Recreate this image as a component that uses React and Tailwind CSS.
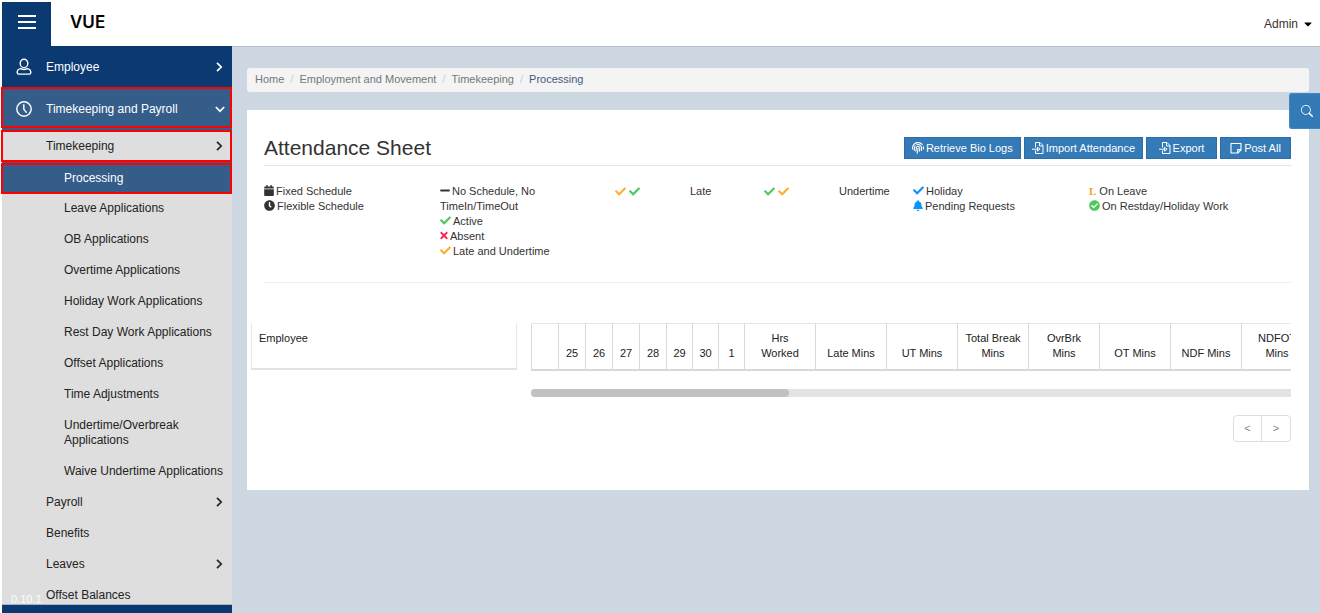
import { FaCalendar, FaClock, FaCheck, FaMinus, FaTimes, FaBell, FaCheckCircle, FaCaretDown } from "react-icons/fa";
import { FaFingerprint } from "react-icons/fa6";
import { BsSearch } from "react-icons/bs";

function UserIcon() {
  return (
    <svg viewBox="0 0 16 18" className="h-[18px] w-4 shrink-0" fill="none" stroke="currentColor" strokeWidth="1.4">
      <ellipse cx="8" cy="5.4" rx="3.8" ry="4.2" />
      <path d="M4.800 10.600C2.600 10.900 1.200 12 1.200 14.400c0 1 .5 1.700 1.500 1.700h10.600c1 0 1.500-.7 1.500-1.700 0-2.400-1.400-3.500-3.600-3.800-1.900 1.100-4.500 1.100-6.400 0z" />
    </svg>
  );
}

function ClockIcon() {
  return (
    <svg viewBox="0 0 18 18" className="h-[18px] w-4 shrink-0" fill="none" stroke="currentColor" strokeWidth="1.6" strokeLinecap="round">
      <circle cx="9" cy="9" r="8.100" />
      <path d="M8.800 4.200v5.200l2.800 3.300" />
    </svg>
  );
}

function Chevron({ down = false }) {
  return (
    <svg viewBox="0 0 10 10" className="size-[10px] shrink-0" fill="none" stroke="currentColor" strokeWidth="1.7">
      <path d={down ? "M.8 3 5 7.200 9.200 3" : "M3 .8 7.200 5 3 9.200"} />
    </svg>
  );
}

function FileArrowIcon() {
  return (
    <svg viewBox="0 0 12 12" className="size-3 shrink-0" fill="none" stroke="currentColor" strokeWidth="1">
      <path d="M3.500 5.500v-5H8l3 3v8H3.500v-3" />
      <path d="M7.500.5v3.500H11" />
      <path d="M0 7.200h5.500M5.500 5.300v3.800l2.600-1.900z" />
    </svg>
  );
}

function NoteIcon() {
  return (
    <svg viewBox="0 0 12 12" className="size-3 shrink-0" fill="none" stroke="currentColor" strokeWidth="1.1">
      <path d="M1 1.500h10v6.500L8 11H1z" />
      <path d="M11 7.600H7.700V11" />
    </svg>
  );
}

function TopItem({ icon, label, open = false }) {
  return (
    <button type="button" aria-expanded={open} className={`flex h-full w-full items-center text-left text-white ${open ? "pt-[3px] pr-[5px] pl-[13px]" : "pt-px pr-2 pl-[14px]"}`}>
      {icon}
      <span className="ml-[14px] flex-1">{label}</span>
      <Chevron down={open} />
    </button>
  );
}

function SubItem({ label, chevron = false, deep = false }) {
  return (
    <li>
      <a href="#" className={`flex items-start justify-between pt-[7px] pb-[9px] pr-2 ${deep ? "pl-[62px]" : "pl-[44px]"}`}>
        <span>{label}</span>
        {chevron && <span className="pt-[2px]"><Chevron /></span>}
      </a>
    </li>
  );
}

const applications = [
  "Leave Applications",
  "OB Applications",
  "Overtime Applications",
  "Holiday Work Applications",
  "Rest Day Work Applications",
  "Offset Applications",
  "Time Adjustments",
  "Undertime/Overbreak Applications",
  "Waive Undertime Applications",
];

function Sidebar() {
  return (
    <nav className="relative flex w-[232px] shrink-0 flex-col pl-[2px] text-[12px] leading-[15px] text-[#222]">
      <div className="min-h-0 flex-1 overflow-clip bg-[#dedede] [overflow-clip-margin:1px]">
        <div className="h-[41px] bg-[#0b3a73]">
          <TopItem icon={<UserIcon />} label="Employee" />
        </div>
        <div className="bg-[#345d8a]">
          <div className="-ml-px h-[41px] border-2 border-[#f00] text-white">
            <TopItem icon={<ClockIcon />} label="Timekeeping and Payroll" open />
          </div>
          <div className="mt-[2px] -ml-px h-8 border-2 border-[#f00] bg-[#dedede]">
            <button type="button" aria-expanded="true" className="flex h-full w-full items-center justify-between pl-[43px] pr-[6px] text-left">
              Timekeeping
              <Chevron />
            </button>
          </div>
          <div className="mt-px -ml-px h-[31px] border-2 border-[#f00]">
            <a href="#" aria-current="page" className="flex h-full items-center pl-[61px] text-white">Processing</a>
          </div>
        </div>
        <ul>
          {applications.map((a) => <SubItem key={a} label={a} deep />)}
          <SubItem label="Payroll" chevron />
          <SubItem label="Benefits" />
          <SubItem label="Leaves" chevron />
          <SubItem label="Offset Balances" />
        </ul>
      </div>
      <div className="h-[9px] shrink-0 border-t border-[#a9b4c0] bg-[#0b3a73]" />
      <span className="absolute bottom-[6px] left-[11px] text-[11px] text-white/90">0.10.1</span>
    </nav>
  );
}

const crumbs = ["Home", "Employment and Movement", "Timekeeping"];

function ActionButton({ icon, children }) {
  return (
    <button type="button" className="flex h-[22px] min-w-[71px] items-center justify-center gap-[2px] border border-[#2e6da4] bg-[#337ab7] px-[7px] text-[11px] text-white">
      {icon}
      {children}
    </button>
  );
}

function Key({ icon, children }) {
  return (
    <p>
      <span className="mr-[2px] inline-block align-[-1px]">{icon}</span>
      {children}
    </p>
  );
}

function Legend() {
  return (
    <div className="grid grid-cols-[176fr_175fr_75fr_74fr_75fr_74fr_176fr_202fr] border-b border-[#eee] pt-[18px] pb-[23px] leading-[15px]">
      <div>
        <Key icon={<FaCalendar className="h-[11px] w-[10px]" />}>Fixed Schedule</Key>
        <Key icon={<FaClock className="size-[11px]" />}>Flexible Schedule</Key>
      </div>
      <div className="pr-8">
        <Key icon={<FaMinus className="h-[11px] w-[10px]" />}>No Schedule, No TimeIn/TimeOut</Key>
        <Key icon={<FaCheck className="size-[11px] text-[#4bc95c]" />}>Active</Key>
        <Key icon={<FaTimes className="h-[11px] w-2 text-[#f5294f]" />}>Absent</Key>
        <Key icon={<FaCheck className="size-[11px] text-[#fbb034]" />}>Late and Undertime</Key>
      </div>
      <div className="flex gap-[3px] pt-[2px]">
        <FaCheck className="size-[11px] text-[#fbb034]" />
        <FaCheck className="size-[11px] text-[#4bc95c]" />
      </div>
      <p>Late</p>
      <div className="flex gap-[3px] pt-[2px]">
        <FaCheck className="size-[11px] text-[#4bc95c]" />
        <FaCheck className="size-[11px] text-[#fbb034]" />
      </div>
      <p>Undertime</p>
      <div>
        <Key icon={<FaCheck className="size-[11px] text-[#0b94fb]" />}>Holiday</Key>
        <Key icon={<FaBell className="h-[11px] w-[10px] text-[#0b94fb]" />}>Pending Requests</Key>
      </div>
      <div>
        <p><b className="mr-[3px] font-['Liberation_Serif',serif] text-[#f9a11b]">L</b>On Leave</p>
        <Key icon={<FaCheckCircle className="size-[11px] text-[#4bc95c]" />}>On Restday/Holiday Work</Key>
      </div>
    </div>
  );
}

const days = ["", "25", "26", "27", "28", "29", "30", "1"];
const totals = ["Hrs\nWorked", "Late Mins", "UT Mins", "Total Break\nMins", "OvrBrk\nMins", "OT Mins", "NDF Mins", "NDFOT\nMins"];

function Sheet() {
  return (
    <div className="-ml-[13px] mt-10 flex gap-[14px] leading-[15px] text-[#222]">
      <table className="h-[47px] w-[266px] shrink-0 self-start">
        <thead>
          <tr>
            <th scope="col" className="border-x border-b-2 border-x-[#e8e8e8] border-b-[#e3e3e3] px-[7px] pt-2 text-left align-top font-normal">Employee</th>
          </tr>
        </thead>
      </table>
      <div className="min-w-0 flex-1">
        <div className="overflow-hidden">
          <table className="h-12 w-[781px] table-fixed">
            <colgroup>
              <col span="5" className="w-[27px]" />
              <col span="3" className="w-[26px]" />
              <col span="8" className="w-[71px]" />
            </colgroup>
            <thead>
              <tr>
                {days.map((d) => (
                  <th key={d} scope="col" className="border border-b-2 border-[#d8d8d8] border-t-[#e8e8e8] pb-2 align-bottom font-normal">{d}</th>
                ))}
                {totals.map((t) => (
                  <th key={t} scope="col" className="border border-b-2 border-[#d8d8d8] border-t-[#e8e8e8] px-1 pb-2 align-bottom font-normal whitespace-pre-line">{t}</th>
                ))}
              </tr>
            </thead>
          </table>
        </div>
        <div className="mt-[18px] h-2 rounded-l bg-[#e3e3e3]">
          <div className="h-full w-[34%] rounded bg-[#c1c1c1]" />
        </div>
        <div className="mt-[18px] flex justify-end">
          <div className="flex divide-x divide-[#ddd] rounded border border-[#ddd] text-[#888]">
            <button type="button" aria-label="Previous page" className="h-[25px] w-7">&lt;</button>
            <button type="button" aria-label="Next page" className="h-[25px] w-7">&gt;</button>
          </div>
        </div>
      </div>
    </div>
  );
}

export default function App() {
  return (
    <div className="flex h-screen flex-col overflow-hidden bg-white pt-[2px] font-['Liberation_Sans',Arial,sans-serif] text-[11px] text-[#333]">
      <header className="flex h-11 shrink-0 items-stretch pl-[2px]">
        <button type="button" aria-label="Menu" className="flex w-[49px] flex-col items-center justify-center gap-[4px] bg-[#0b3a73] pb-1">
          <span className="h-[2px] w-[18px] bg-white" />
          <span className="h-[2px] w-[18px] bg-white" />
          <span className="h-[2px] w-[18px] bg-white" />
        </button>
        <div className="flex flex-1 items-center justify-between pl-[19px] pr-[6px]">
          <a href="#" className="pb-[2px] font-[Inter,sans-serif] text-[17px] font-semibold text-black">VUE</a>
          <button type="button" className="flex items-center gap-1 text-[12px]">
            Admin
            <FaCaretDown className="size-3 text-black" />
          </button>
        </div>
      </header>
      <div className="flex min-h-0 flex-1">
        <Sidebar />
        <main className="relative min-w-0 flex-1 border-t border-[#b4bfca] bg-[#ced8e2] pt-[21px] pr-[11px] pl-[15px]">
          <nav aria-label="Breadcrumb" className="rounded-[3px] bg-[#f4f4f4]">
            <ol className="flex h-6 items-center px-2 pb-[2px] text-[#777]">
              {crumbs.map((c) => (
                <li key={c}>
                  <a href="#">{c}</a>
                  <span className="mx-[6px] text-[#ccc]">/</span>
                </li>
              ))}
              <li className="text-[#44597f]" aria-current="page">Processing</li>
            </ol>
          </nav>
          <section className="mt-[18px] bg-white pt-[27px] pr-[18px] pb-12 pl-[17px]">
            <div className="flex items-start justify-between border-b border-[#e5e5e5] pb-[6px]">
              <h1 className="text-[21px] leading-[22px]">Attendance Sheet</h1>
              <div className="flex gap-[3px]">
                <ActionButton icon={<FaFingerprint className="size-3" />}>Retrieve Bio Logs</ActionButton>
                <ActionButton icon={<FileArrowIcon />}>Import Attendance</ActionButton>
                <ActionButton icon={<FileArrowIcon />}>Export</ActionButton>
                <ActionButton icon={<NoteIcon />}>Post All</ActionButton>
              </div>
            </div>
            <Legend />
            <Sheet />
          </section>
          <button type="button" aria-label="Search" className="absolute top-[46px] right-0 flex h-9 w-[31px] items-center justify-center rounded-l-[3px] border border-r-0 border-[#4587c0] bg-[#337ab7] pl-1 text-white">
            <BsSearch className="size-3" />
          </button>
        </main>
      </div>
    </div>
  );
}
